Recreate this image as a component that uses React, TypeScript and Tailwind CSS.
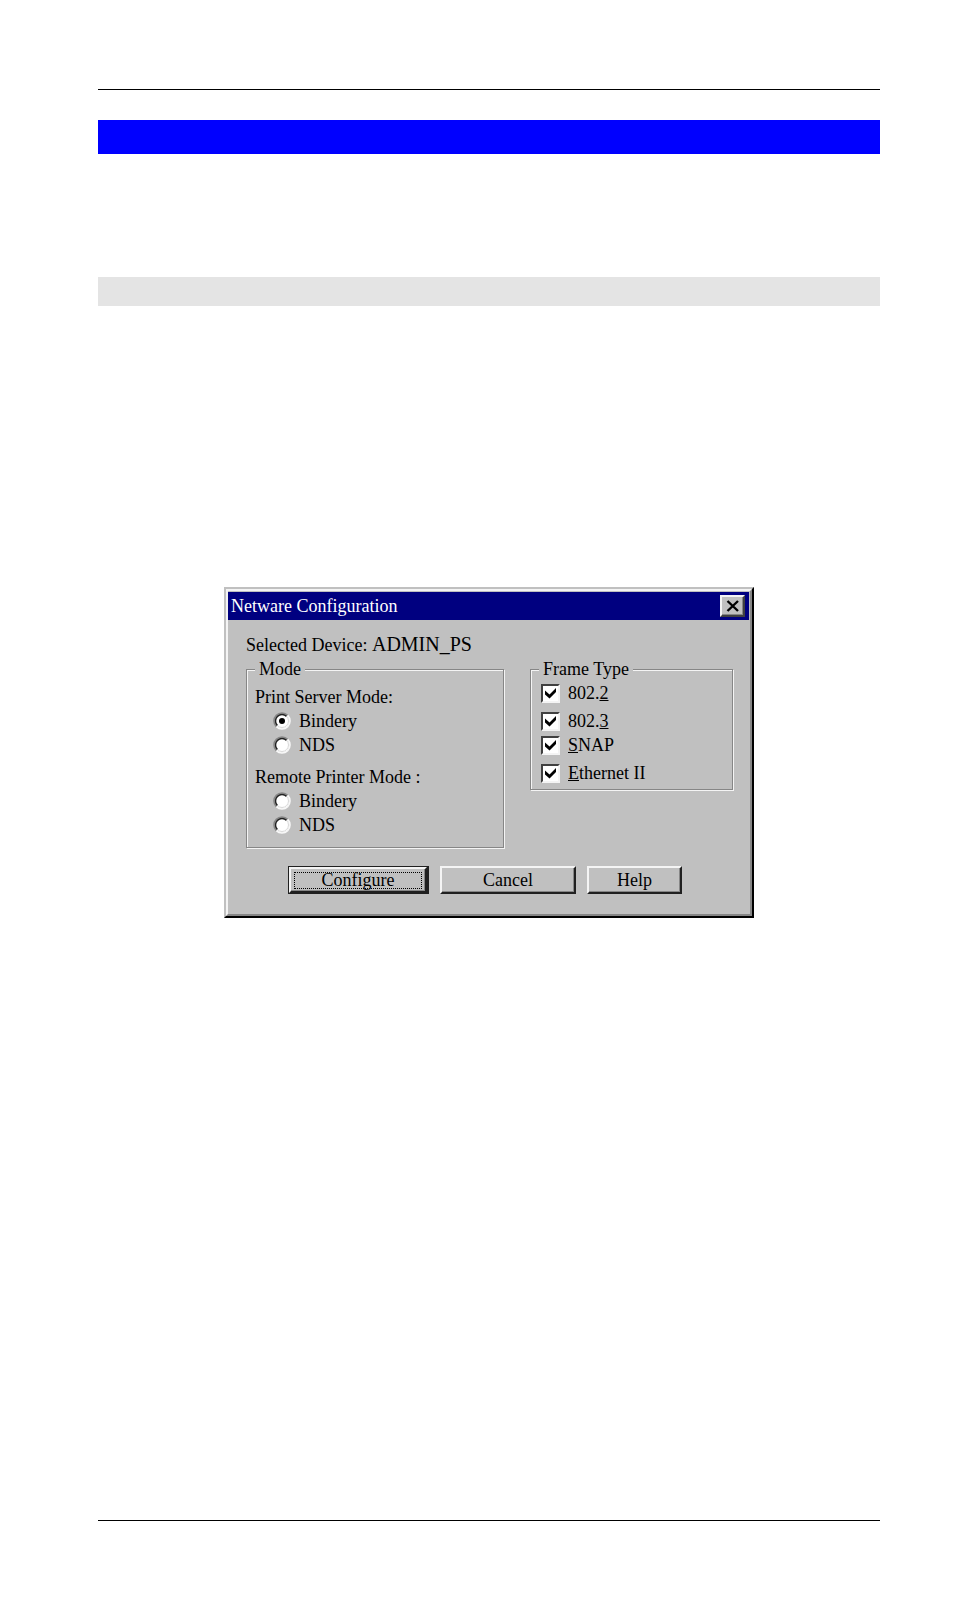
import { useState } from 'react'
import type { ReactNode } from 'react'

interface FrameType {
  id: string
  label: ReactNode
  spaced?: boolean
}

const modes = ['Bindery', 'NDS']

const frameTypes: FrameType[] = [
  { id: '802.2', label: <>802.<u>2</u></> },
  { id: '802.3', label: <>802.<u>3</u></>, spaced: true },
  { id: 'snap', label: <><u>S</u>NAP</> },
  { id: 'ethernet', label: <><u>E</u>thernet II</>, spaced: true },
]

function GroupBox({ title, className, children }: { title: string; className: string; children: ReactNode }) {
  return (
    <fieldset
      className={`min-w-0 border border-[#868686] pl-2 shadow-[inset_1px_1px_0_#f4f4f4,1px_1px_0_#f4f4f4] ${className}`}
    >
      <legend className="bg-[#c0c0c0] px-1">{title}</legend>
      {children}
    </fieldset>
  )
}

function ModeOptions({ title, name, value, onChange }: {
  title: string
  name: string
  value: string
  onChange: (value: string) => void
}) {
  return (
    <div role="radiogroup" aria-label={title}>
      <div>{title}</div>
      {modes.map((mode) => (
        <label key={mode} className="ml-[18px] flex h-6 items-center gap-2">
          <span className="grid size-[18px] shrink-0">
            <input
              type="radio"
              name={name}
              value={mode}
              checked={value === mode}
              onChange={() => onChange(mode)}
              className="peer size-[18px] appearance-none [grid-area:1/1]"
            />
            <svg viewBox="0 0 18 18" className="pointer-events-none size-[18px] [grid-area:1/1]" fill="none">
              <circle cx="9" cy="9" r="7.500" fill="#fff" />
              <path d="M3.3 14.7A8 8 0 0 1 14.7 3.3" stroke="#868686" strokeWidth="1.500" />
              <path d="M4.4 13.6A6.500 6.500 0 0 1 13.6 4.4" stroke="#222" strokeWidth="1.500" />
              <path d="M14.7 3.3A8 8 0 0 1 3.3 14.7" stroke="#f8f8f8" strokeWidth="1.500" />
              <path d="M13.6 4.4A6.500 6.500 0 0 1 4.4 13.6" stroke="#d8d8d8" strokeWidth="1" />
            </svg>
            <span className="hidden size-[6px] place-self-center rounded-full bg-black [grid-area:1/1] peer-checked:block" />
          </span>
          <span>{mode}</span>
        </label>
      ))}
    </div>
  )
}

function DialogButton({ className, children }: { className: string; children: ReactNode }) {
  return (
    <button
      type="button"
      className={`h-7 border-2 border-t-[#f4f4f4] border-r-[#202020] border-b-[#202020] border-l-[#f4f4f4] leading-5 shadow-[inset_-1px_-1px_0_#868686] ${className}`}
    >
      {children}
    </button>
  )
}

function NetwareDialog() {
  const [serverMode, setServerMode] = useState('Bindery')
  const [printerMode, setPrinterMode] = useState('')

  return (
    <section
      role="dialog"
      aria-label="Netware Configuration"
      className="mx-auto w-full max-w-[530px] border-2 border-t-[#c0c0c0] border-r-black border-b-black border-l-[#c0c0c0] bg-[#c0c0c0] font-['Liberation_Serif',serif] text-lg leading-6 text-black"
    >
      <div className="border-2 border-t-[#f4f4f4] border-r-[#868686] border-b-[#868686] border-l-[#f4f4f4] pt-px pr-px pb-5">
        <header className="flex h-7 items-center justify-between bg-[#000080] pr-1 pl-[3px] text-white">
          <h1>Netware Configuration</h1>
          <button
            type="button"
            aria-label="Close"
            className="flex h-[22px] w-[25px] items-center justify-center border-2 border-t-[#f4f4f4] border-r-[#404040] border-b-[#404040] border-l-[#f4f4f4] bg-[#c0c0c0] shadow-[inset_-1px_-1px_0_#868686]"
          >
            <svg viewBox="0 0 14 12" className="h-3 w-[14px]" stroke="#000" strokeWidth="2.4">
              <path d="M1.500 1L12 11M12 1L1.500 11" />
            </svg>
          </button>
        </header>

        <div className="pt-[13px] pr-4 pl-[18px]">
          <p>
            Selected Device: <span className="text-[20px] leading-none">ADMIN_PS</span>
          </p>

          <div className="flex items-start justify-between">
            <GroupBox title="Mode" className="w-[258px] pt-1 pb-[10px]">
              <ModeOptions
                title="Print Server Mode:"
                name="server-mode"
                value={serverMode}
                onChange={setServerMode}
              />
              <div className="mt-2">
                <ModeOptions
                  title="Remote Printer Mode :"
                  name="printer-mode"
                  value={printerMode}
                  onChange={setPrinterMode}
                />
              </div>
            </GroupBox>

            <GroupBox title="Frame Type" className="w-[203px] pb-1">
              {frameTypes.map((frame) => (
                <label
                  key={frame.id}
                  className={`ml-[2px] flex h-6 items-center gap-2 ${frame.spaced ? 'mt-1' : ''}`}
                >
                  <span className="grid shrink-0">
                    <input
                      type="checkbox"
                      defaultChecked
                      className="peer size-[19px] appearance-none border-2 border-t-[#404040] border-r-[#f4f4f4] border-b-[#f4f4f4] border-l-[#404040] bg-white [grid-area:1/1]"
                    />
                    <svg
                      viewBox="0 0 12 12"
                      className="pointer-events-none hidden size-3 place-self-center [grid-area:1/1] peer-checked:block"
                    >
                      <path d="M0 3.500L4.500 7.500L11 1V5L4.500 11.500L0 7.500Z" fill="#000" />
                    </svg>
                  </span>
                  <span>{frame.label}</span>
                </label>
              ))}
            </GroupBox>
          </div>
        </div>

        <div className="mt-[18px] flex justify-center gap-[11px] pr-[7px]">
          <div className="border border-[#202020] bg-[#202020] pr-px">
            <DialogButton className="flex h-[26px] w-[138px] items-center justify-center bg-[#c0c0c0]">
              <span className="mx-[3px] flex h-[17px] w-full items-center justify-center border border-dotted border-black">
                Configure
              </span>
            </DialogButton>
          </div>
          <DialogButton className="w-[136px]">Cancel</DialogButton>
          <DialogButton className="w-[95px]">Help</DialogButton>
        </div>
      </div>
    </section>
  )
}

export default function App() {
  return (
    <div className="flex min-h-screen flex-col bg-white pt-[89px] pr-[74px] pb-[89px] pl-[98px]">
      <hr className="h-px border-0 bg-black" />
      <div className="mt-[30px] h-[34px] bg-[#0000ff]" />
      <div className="mt-[123px] h-[29px] bg-[#e4e4e4]" />
      <main className="mt-[281px] mb-10">
        <NetwareDialog />
      </main>
      <hr className="mt-auto h-px border-0 bg-black" />
    </div>
  )
}
